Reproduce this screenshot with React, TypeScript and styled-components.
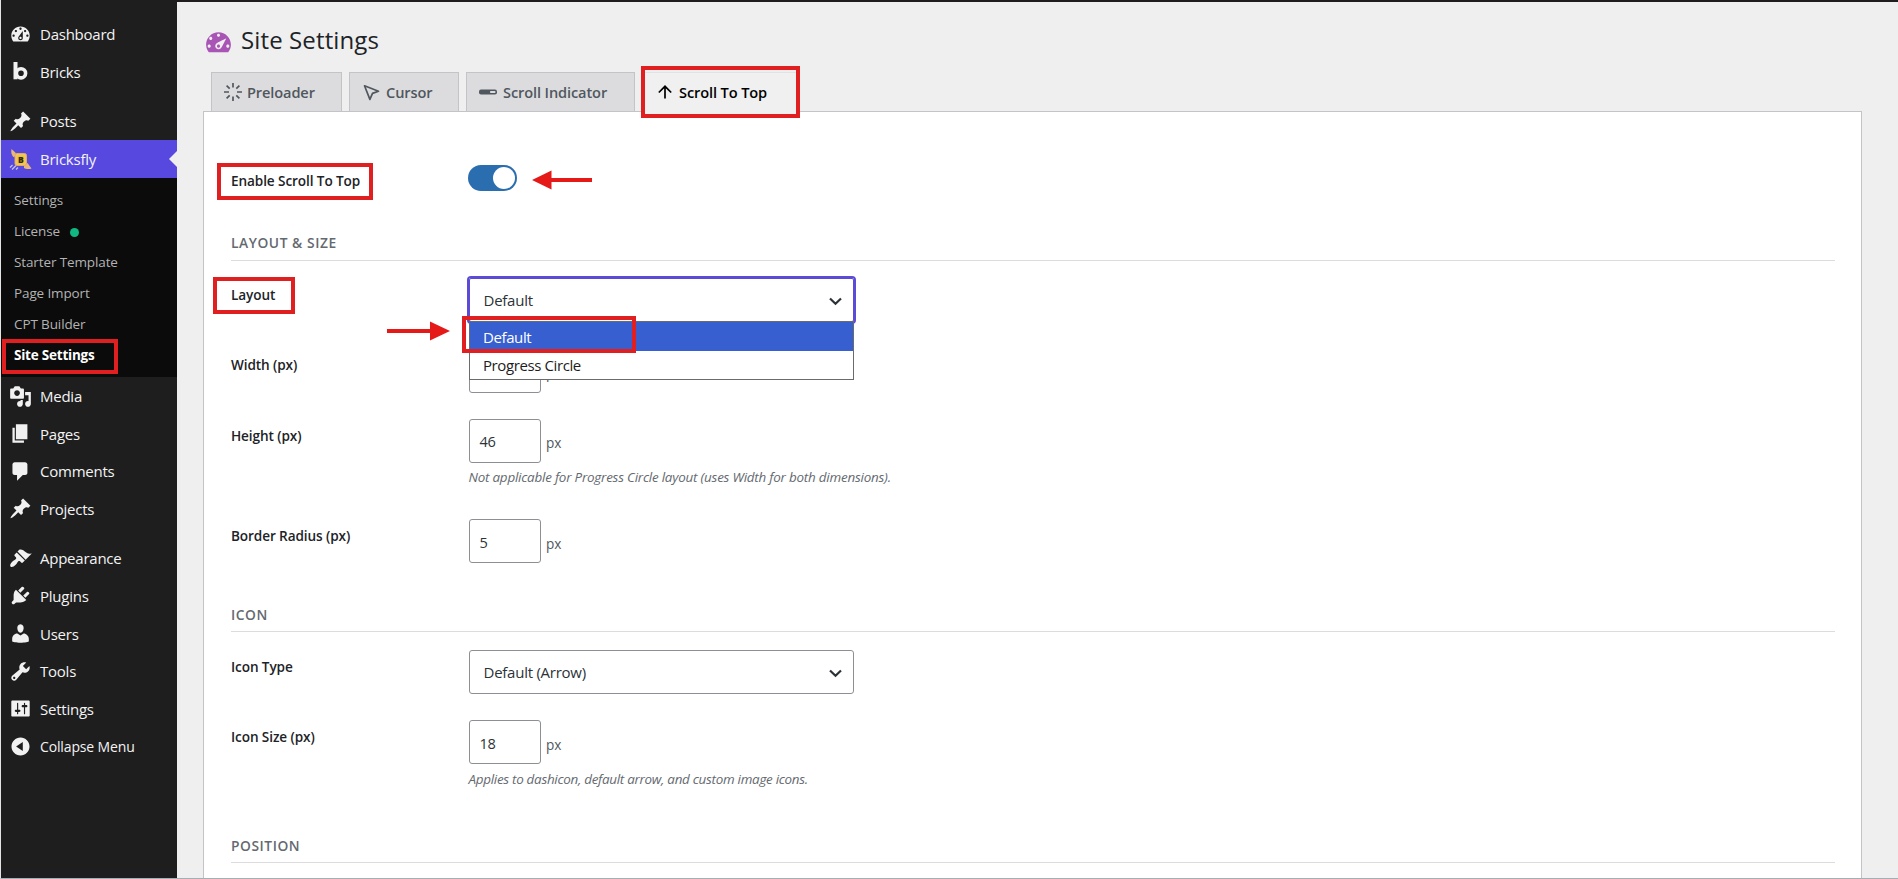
import React from "react";
import styled, { createGlobalStyle, css } from "styled-components";

const GlobalStyle = createGlobalStyle`
  * { box-sizing: border-box; }
  html, body { margin: 0; padding: 0; overflow: hidden; }
  body {
    font-family: "Open Sans", "Noto Sans", sans-serif;
    color: #1d2327;
    background: #efefef;
  }
`;

/* ---------- page frame ---------- */

const Page = styled.div`
  position: relative;
  display: flex;
  width: 1898px;
  height: 879px;
  overflow: hidden;
  background: #efefef;
  border-left: 1px solid #e4e4e4;
  border-bottom: 1px solid #a9adb0;
`;

const Sidebar = styled.nav`
  width: 176px;
  flex: none;
  padding-top: 15.6px;
  background: #1e1e1e;
`;

const Main = styled.main`
  flex: 1;
  min-width: 0;
  display: flex;
  flex-direction: column;
  border-top: 2px solid #1f1d1e;
  padding: 0 36px 0 26px;
`;

/* ---------- sidebar ---------- */

const MenuItem = styled.a<{ $active?: boolean; $gap?: boolean; $small?: boolean }>`
  position: relative;
  display: flex;
  align-items: center;
  gap: 8px;
  height: 37.6px;
  padding-left: 8px;
  margin-top: ${(p) => (p.$gap ? "11.8px" : "0")};
  font-size: ${(p) => (p.$small ? "14px" : "15px")};
  letter-spacing: ${(p) => (p.$small ? "-0.14px" : "-0.24px")};
  color: #f3f3f3;
  white-space: nowrap;
  ${(p) =>
    p.$active &&
    css`
      background: #5749df;
      &::after {
        content: "";
        position: absolute;
        right: 0;
        top: 10.5px;
        border: 8.5px solid transparent;
        border-left: 0;
        border-right-color: #efefef;
      }
    `}
`;

const MenuIcon = styled.svg`
  width: 23px;
  height: 23px;
  flex: none;
  fill: #f1f1f1;
`;

const SubMenu = styled.div`
  height: 199px;
  margin-bottom: 0.6px;
  padding: 6.8px 0 0 13px;
  background: #0b0b0b;
`;

const SubItem = styled.a<{ $current?: boolean }>`
  display: flex;
  align-items: center;
  gap: 10.5px;
  height: 31px;
  font-size: 13.5px;
  letter-spacing: ${(p) => (p.$current ? "-0.22px" : "-0.12px")};
  font-weight: ${(p) => (p.$current ? 700 : 400)};
  color: ${(p) => (p.$current ? "#ffffff" : "#b3b3b3")};
  white-space: nowrap;
`;

const StatusDot = styled.span`
  width: 9px;
  height: 9px;
  margin-top: 2px;
  border-radius: 50%;
  background: #10b981;
`;

/* ---------- header and tabs ---------- */

const TitleBar = styled.header`
  display: flex;
  align-items: center;
  height: 70px;
  gap: 7px;
`;

const TitleIcon = styled.svg`
  width: 31px;
  height: 31px;
  margin-top: 9px;
  fill: #a855b5;
`;

const Title = styled.h1`
  margin: 6px 0 0;
  font-size: 24px;
  line-height: 32px;
  font-weight: 400;
  letter-spacing: 0.12px;
`;

const Tabs = styled.div`
  display: flex;
  gap: 7px;
  height: 39px;
  padding-left: 8px;
`;

const Tab = styled.button<{ $width: number; $active?: boolean; $pad: number; $gap: number }>`
  display: flex;
  align-items: center;
  gap: ${(p) => p.$gap}px;
  width: ${(p) => p.$width}px;
  height: ${(p) => (p.$active ? 42 : 39)}px;
  padding: 0 0 ${(p) => (p.$active ? 3 : 0)}px ${(p) => p.$pad}px;
  border: 1px solid ${(p) => (p.$active ? "#e2e2e4" : "#c3c4c7")};
  border-bottom: 0;
  background: ${(p) => (p.$active ? "#f0f0f0" : "#dcdcde")};
  color: ${(p) => (p.$active ? "#000000" : "#50575e")};
  font-family: inherit;
  font-size: 14.6px;
  font-weight: 600;
  letter-spacing: -0.12px;
  white-space: nowrap;
  position: relative;
  svg {
    flex: none;
  }
`;

/* ---------- settings panel ---------- */

const Panel = styled.section`
  flex: 1;
  min-height: 0;
  overflow: hidden;
  padding: 53px 26px 0 27px;
  background: #ffffff;
  border: 1px solid #c3c4c7;
  border-bottom: 0;
`;

const SectionHeading = styled.h2<{ $before: number; $after: number }>`
  margin: 0 0 ${(p) => p.$after}px;
  padding-top: ${(p) => p.$before}px;
  height: 29px;
  border-bottom: 1px solid #dcdcde;
  font-size: 13.8px;
  line-height: 20px;
  font-weight: 600;
  letter-spacing: 0.55px;
  color: #646970;
`;

const Row = styled.div<{ $height: number }>`
  display: grid;
  grid-template-columns: 238px 1fr;
  align-items: start;
  height: ${(p) => p.$height}px;
`;

const Label = styled.label<{ $raised?: boolean }>`
  padding-top: ${(p) => (p.$raised ? 5.6 : 6.6)}px;
  font-size: 13.6px;
  line-height: 20px;
  font-weight: 600;
  letter-spacing: -0.1px;
`;

const Control = styled.div`
  position: relative;
`;

const Toggle = styled.div`
  display: flex;
  justify-content: flex-end;
  align-items: center;
  width: 49px;
  height: 26px;
  margin-left: -1px;
  padding-right: 2px;
  border-radius: 13px;
  background: #2a6eaf;
`;

const Knob = styled.span`
  width: 22px;
  height: 22px;
  border-radius: 50%;
  background: #ffffff;
`;

const SelectBox = styled.div<{ $focused?: boolean }>`
  display: flex;
  align-items: center;
  justify-content: space-between;
  width: 385px;
  height: 44px;
  padding: 0 11px 0 13.5px;
  border: 1px solid ${(p) => (p.$focused ? "#5b4bd6" : "#8c8f94")};
  box-shadow: ${(p) => (p.$focused ? "0 0 0 2px #5b4bd6" : "none")};
  border-radius: ${(p) => (p.$focused ? 2 : 3)}px;
  font-size: 15px;
  letter-spacing: -0.25px;
  color: #2c3338;
  svg {
    margin-top: 2px;
  }
`;

const OptionList = styled.div`
  position: absolute;
  z-index: 2;
  top: 43px;
  left: 0;
  width: 385px;
  height: 59px;
  border: 1px solid #6b6b6b;
  background: #ffffff;
`;

const Option = styled.div<{ $selected?: boolean }>`
  height: ${(p) => (p.$selected ? 29 : 28)}px;
  padding-left: 13px;
  font-size: 15px;
  line-height: ${(p) => (p.$selected ? 31 : 29)}px;
  letter-spacing: -0.4px;
  background: ${(p) => (p.$selected ? "#375fcf" : "#ffffff")};
  color: ${(p) => (p.$selected ? "#ffffff" : "#1d1d1d")};
`;

const NumberLine = styled.div`
  display: flex;
  align-items: center;
  gap: 5px;
  height: 44px;
`;

const NumberBox = styled.div<{ $low?: boolean }>`
  display: flex;
  align-items: center;
  width: 72px;
  height: 44px;
  padding: ${(p) => (p.$low ? 2 : 0)}px 0 0 9.5px;
  border: 1px solid #8c8f94;
  border-radius: 3px;
  font-size: 14.6px;
  letter-spacing: -0.25px;
  color: #2c3338;
`;

const Unit = styled.span<{ $low?: boolean }>`
  padding-top: ${(p) => (p.$low ? 4 : 2)}px;
  font-size: 13.6px;
  color: #50575e;
`;

const Help = styled.p<{ $low?: boolean }>`
  margin: ${(p) => (p.$low ? 5 : 4)}px 0 0 -0.5px;
  font-size: 13.4px;
  line-height: 20px;
  font-style: italic;
  letter-spacing: ${(p) => (p.$low ? -0.27 : -0.21)}px;
  color: #646970;
  white-space: nowrap;
`;

/* ---------- callouts drawn over the page ---------- */

const Frame = styled.div<{ $x: number; $y: number; $w: number; $h: number }>`
  position: absolute;
  z-index: 5;
  left: ${(p) => p.$x - 1}px;
  top: ${(p) => p.$y}px;
  width: ${(p) => p.$w}px;
  height: ${(p) => p.$h}px;
  border: 4px solid #e02020;
  pointer-events: none;
`;

const Pointer = styled.svg<{ $x: number; $y: number }>`
  position: absolute;
  z-index: 5;
  left: ${(p) => p.$x - 1}px;
  top: ${(p) => p.$y}px;
  fill: #e61919;
`;

/* ---------- icons ---------- */

const paths = {
  dashboard:
    "M3.76 16h12.48c1.1-1.37 1.76-3.11 1.76-5 0-4.42-3.58-8-8-8s-8 3.58-8 8c0 1.89.66 3.63 1.76 5zM10 4c.55 0 1 .45 1 1s-.45 1-1 1-1-.45-1-1 .45-1 1-1zM6 6c.55 0 1 .45 1 1s-.45 1-1 1-1-.45-1-1 .45-1 1-1zm8 0c.55 0 1 .45 1 1s-.45 1-1 1-1-.45-1-1 .45-1 1-1zm-5.37 5.55L12 7v6c0 1.1-.9 2-2 2s-2-.9-2-2c0-.57.24-1.08.63-1.45zM4 10c.55 0 1 .45 1 1s-.45 1-1 1-1-.45-1-1 .45-1 1-1zm12 0c.55 0 1 .45 1 1s-.45 1-1 1-1-.45-1-1 .45-1 1-1zm-5 3c0-.55-.45-1-1-1s-1 .45-1 1 .45 1 1 1 1-.45 1-1z",
  performance:
    "M3.76 17.01h12.48C17.34 15.63 18 13.9 18 12c0-4.41-3.58-8-8-8s-8 3.59-8 8c0 1.9.66 3.63 1.76 5.01zM9 6c0-.55.45-1 1-1s1 .45 1 1c0 .56-.45 1-1 1s-1-.44-1-1zM4 8c0-.55.45-1 1-1s1 .45 1 1c0 .56-.45 1-1 1s-1-.44-1-1zm4.52 3.4c.84-.83 6.51-3.5 6.51-3.5s-2.66 5.68-3.49 6.51c-.84.84-2.18.84-3.02 0-.83-.83-.83-2.18 0-3.01zM3 13c0-.55.45-1 1-1s1 .45 1 1c0 .56-.45 1-1 1s-1-.44-1-1zm6 0c0 .56.45 1 1 1s1-.44 1-1c0-.55-.45-1-1-1s-1 .45-1 1zm6 0c0-.55.45-1 1-1s1 .45 1 1c0 .56-.45 1-1 1s-1-.44-1-1z",
  pin: "M10.44 3.02l1.82-1.82 6.36 6.35-1.83 1.82c-1.05-.68-2.48-.57-3.41.36l-.75.75c-.92.93-1.04 2.35-.35 3.41l-1.83 1.82-2.41-2.41-2.8 2.79c-.42.42-3.38 2.71-3.8 2.29s1.86-3.39 2.28-3.81l2.79-2.79L4.1 9.36l1.83-1.82c1.05.69 2.48.57 3.4-.36l.75-.75c.93-.92 1.05-2.35.36-3.41z",
  media:
    "M13 11V4c0-.55-.45-1-1-1h-1.67L9 1H5L3.67 3H2c-.55 0-1 .45-1 1v7c0 .55.45 1 1 1h10c.55 0 1-.45 1-1zM7 4.5c1.38 0 2.5 1.12 2.5 2.5S8.38 9.5 7 9.5 4.5 8.38 4.5 7 5.62 4.5 7 4.5zM14 6h5v10.5c0 1.38-1.12 2.5-2.5 2.5S14 17.88 14 16.5s1.12-2.5 2.5-2.5c.17 0 .34.02.5.05V9h-3V6zm-4 8.05V13h2v3.5c0 1.38-1.12 2.5-2.5 2.5S7 17.88 7 16.5 8.12 14 9.5 14c.17 0 .34.02.5.05z",
  page: "M6 15V2h10v13H6zm-1 1h8v2H3V5h2v11z",
  comment:
    "M5 2h9c1.1 0 2 .9 2 2v7c0 1.1-.9 2-2 2h-2l-5 5v-5H5c-1.1 0-2-.9-2-2V4c0-1.1.9-2 2-2z",
  brush:
    "M14.48 11.06L7.41 3.99l1.5-1.5c.5-.56 2.3-.47 3.51.32 1.21.8 1.43 1.28 2.91 2.1 1.18.64 2.45 1.26 4.45.85zm-.71.71L6.7 4.7 4.93 6.47c-.39.39-.39 1.02 0 1.41l1.06 1.06c.39.39.39 1.03 0 1.42-.6.6-1.43 1.11-2.21 1.69-.35.26-.7.53-1.01.84C1.43 14.23.4 16.08 1.4 17.07c.99 1 2.84-.03 4.18-1.36.31-.31.58-.66.85-1.02.57-.78 1.08-1.61 1.69-2.21.39-.39 1.02-.39 1.41 0l1.06 1.06c.39.39 1.02.39 1.41 0z",
  plug: "M13.11 4.36L9.87 7.6 8 5.73l3.24-3.24c.35-.34 1.05-.2 1.56.32.52.51.66 1.21.31 1.55zm-8 1.77l.91-1.12 9.01 9.01-1.19.84c-.71.71-2.63 1.16-3.82 1.16H6.14L4.9 17.26c-.59.59-1.54.59-2.12 0-.59-.58-.59-1.53 0-2.12l1.24-1.24v-3.88c0-1.13.4-3.19 1.09-3.89zm7.26 3.97l3.24-3.24c.34-.35 1.04-.21 1.55.31.52.51.66 1.21.31 1.55l-3.24 3.25z",
  user: "M10 9.25c-2.27 0-2.73-3.44-2.73-3.44C7 4.02 7.82 2 9.97 2c2.16 0 2.98 2.02 2.71 3.81 0 0-.41 3.44-2.68 3.44zm0 2.57L12.72 10c2.39 0 4.52 2.33 4.52 4.53v2.49s-3.65 1.13-7.24 1.13c-3.65 0-7.24-1.13-7.24-1.13v-2.49c0-2.25 1.94-4.48 4.47-4.48z",
  wrench:
    "M16.68 9.77c-1.34 1.34-3.3 1.67-4.95.99l-5.41 6.52c-.99.99-2.59.99-3.58 0s-.99-2.59 0-3.57l6.52-5.42c-.68-1.65-.35-3.61.99-4.95 1.28-1.28 3.12-1.62 4.72-1.06l-2.89 2.89 2.82 2.82 2.86-2.87c.53 1.58.18 3.39-1.08 4.65zM3.81 16.21c.4.39 1.04.39 1.43 0 .4-.4.4-1.04 0-1.43-.39-.4-1.03-.4-1.43 0-.39.39-.39 1.03 0 1.43z",
  sliders:
    "M18 16V4c0-.55-.45-1-1-1H3c-.55 0-1 .45-1 1v12c0 .55.45 1 1 1h14c.55 0 1-.45 1-1zM8 11h1c.55 0 1 .45 1 1s-.45 1-1 1H8v1.5c0 .28-.22.5-.5.5s-.5-.22-.5-.5V13H6c-.55 0-1-.45-1-1s.45-1 1-1h1V5.5c0-.28.22-.5.5-.5s.5.22.5.5V11zm5-2h-1c-.55 0-1-.45-1-1s.45-1 1-1h1V5.5c0-.28.22-.5.5-.5s.5.22.5.5V7h1c.55 0 1 .45 1 1s-.45 1-1 1h-1v5.5c0 .28-.22.5-.5.5s-.5-.22-.5-.5V9z",
  collapse:
    "M10 2.16c4.33 0 7.84 3.51 7.84 7.84s-3.51 7.84-7.84 7.84S2.16 14.33 2.16 10 5.71 2.16 10 2.16zm2 11.72V6.12L6.18 9.97z",
};

const Glyph = ({ name }: { name: keyof typeof paths }) => (
  <MenuIcon viewBox="0 0 20 20">
    <path d={paths[name]} />
  </MenuIcon>
);

const BricksIcon = () => (
  <MenuIcon viewBox="0 0 23 23">
    <rect x="4.5" y="2" width="4" height="17.3" />
    <circle cx="12" cy="13.3" r="4.6" fill="none" stroke="#f1f1f1" strokeWidth="3.6" />
  </MenuIcon>
);

const BricksflyIcon = () => (
  <MenuIcon viewBox="0 0 23 23">
    <path d="M2.500 2l3.800 3.500 2 3.500-4 1C2.500 8 1.800 5 2.500 2z" fill="#e9b778" />
    <path d="M15 18l3.500-2 4 5.500c-2.800 1-5.700.7-7.500-.5z" fill="#e9b778" />
    <path d="M1 20.500l2.500-2.500M3 22.500l4-4M7 22.500l2-2" stroke="#c9c3df" strokeWidth="1.2" />
    <rect x="6" y="6.500" width="11.500" height="12" rx="2" fill="#f2c55a" stroke="#e0ab66" />
    <rect x="8.700" y="8.700" width="6.200" height="7.600" fill="#e8c432" />
    <text x="11.800" y="15.600" fontSize="8.500" fontWeight="800" textAnchor="middle" fill="#33270d">
      B
    </text>
  </MenuIcon>
);

const LoaderIcon = () => (
  <svg width="18" height="20" viewBox="0 0 18 20" stroke="#50575e" strokeWidth="1.7" fill="none">
    <path d="M9 1v4.500M9 14.500V19M0 10h5M13 10h5M2.600 3.600l3.100 3.100M12.300 13.300l3.100 3.100M2.600 16.400l3.100-3.100M12.300 6.700l3.100-3.100" />
  </svg>
);

const CursorIcon = () => (
  <svg width="17" height="17" viewBox="0 0 17 17" stroke="#50575e" strokeWidth="1.7" strokeLinejoin="round" fill="none">
    <path d="M1.500 1.800l14 5.400-6 2.200-2.600 6z" />
  </svg>
);

const IndicatorIcon = () => (
  <svg width="18" height="6" viewBox="0 0 18 6">
    <rect x="0" y="0.500" width="18" height="5" rx="2" fill="#50575e" />
    <rect x="11" y="2" width="5.500" height="2" rx="0.800" fill="#dcdcde" />
  </svg>
);

const ArrowUpIcon = () => (
  <svg width="14" height="14" viewBox="0 0 14 14" stroke="#000" strokeWidth="1.700" fill="none">
    <path d="M7 13.500V1.500M0.800 7.500L7 1.300l6.200 6.200" />
  </svg>
);

const Chevron = () => (
  <svg width="13" height="9" viewBox="0 0 13 9" stroke="#2c3338" strokeWidth="2.200" fill="none">
    <path d="M1 1.500l5.500 5.300L12 1.500" />
  </svg>
);

/* ---------- composition ---------- */

type NumberFieldProps = {
  label: string;
  value: string;
  height: number;
  help?: string;
  raised?: boolean;
  low?: boolean;
};

const NumberField = ({ label, value, height, help, raised, low }: NumberFieldProps) => (
  <Row $height={height}>
    <Label $raised={raised}>{label}</Label>
    <Control>
      <NumberLine>
        <NumberBox $low={low}>{value}</NumberBox>
        <Unit $low={low}>px</Unit>
      </NumberLine>
      {help && <Help $low={low}>{help}</Help>}
    </Control>
  </Row>
);

export default function App() {
  return (
    <>
      <GlobalStyle />
      <Page>
        <Sidebar>
          <MenuItem><Glyph name="dashboard" />Dashboard</MenuItem>
          <MenuItem><BricksIcon />Bricks</MenuItem>
          <MenuItem $gap><Glyph name="pin" />Posts</MenuItem>
          <MenuItem $active><BricksflyIcon />Bricksfly</MenuItem>
          <SubMenu>
            <SubItem>Settings</SubItem>
            <SubItem>License<StatusDot /></SubItem>
            <SubItem>Starter Template</SubItem>
            <SubItem>Page Import</SubItem>
            <SubItem>CPT Builder</SubItem>
            <SubItem $current>Site Settings</SubItem>
          </SubMenu>
          <MenuItem><Glyph name="media" />Media</MenuItem>
          <MenuItem><Glyph name="page" />Pages</MenuItem>
          <MenuItem><Glyph name="comment" />Comments</MenuItem>
          <MenuItem><Glyph name="pin" />Projects</MenuItem>
          <MenuItem $gap><Glyph name="brush" />Appearance</MenuItem>
          <MenuItem><Glyph name="plug" />Plugins</MenuItem>
          <MenuItem><Glyph name="user" />Users</MenuItem>
          <MenuItem><Glyph name="wrench" />Tools</MenuItem>
          <MenuItem><Glyph name="sliders" />Settings</MenuItem>
          <MenuItem $small><Glyph name="collapse" />Collapse Menu</MenuItem>
        </Sidebar>

        <Main>
          <TitleBar>
            <TitleIcon viewBox="0 0 20 20"><path d={paths.performance} /></TitleIcon>
            <Title>Site Settings</Title>
          </TitleBar>
          <Tabs>
            <Tab $width={131} $pad={12} $gap={5}><LoaderIcon />Preloader</Tab>
            <Tab $width={110} $pad={13} $gap={6}><CursorIcon />Cursor</Tab>
            <Tab $width={169} $pad={12} $gap={6}><IndicatorIcon />Scroll Indicator</Tab>
            <Tab $width={155} $pad={15} $gap={7} $active><ArrowUpIcon />Scroll To Top</Tab>
          </Tabs>
          <Panel>
            <Row $height={67}>
              <Label $raised>Enable Scroll To Top</Label>
              <Control><Toggle><Knob /></Toggle></Control>
            </Row>

            <SectionHeading $before={1} $after={17}>LAYOUT &amp; SIZE</SectionHeading>
            <Row $height={71}>
              <Label>Layout</Label>
              <Control>
                <SelectBox $focused>Default<Chevron /></SelectBox>
                <OptionList>
                  <Option $selected>Default</Option>
                  <Option>Progress Circle</Option>
                </OptionList>
              </Control>
            </Row>
            <NumberField label="Width (px)" value="" height={70} raised />
            <NumberField
              label="Height (px)"
              value="46"
              height={100}
              help="Not applicable for Progress Circle layout (uses Width for both dimensions)."
            />
            <NumberField label="Border Radius (px)" value="5" height={84} low />

            <SectionHeading $before={2} $after={18}>ICON</SectionHeading>
            <Row $height={70}>
              <Label>Icon Type</Label>
              <Control><SelectBox>Default (Arrow)<Chevron /></SelectBox></Control>
            </Row>
            <NumberField
              label="Icon Size (px)"
              value="18"
              height={114}
              help="Applies to dashicon, default arrow, and custom image icons."
              low
            />

            <SectionHeading $before={2} $after={0}>POSITION</SectionHeading>
          </Panel>
        </Main>

        <Frame $x={641} $y={66} $w={159} $h={52} />
        <Frame $x={217} $y={163} $w={156} $h={37} />
        <Frame $x={213} $y={277} $w={82} $h={37} />
        <Frame $x={462} $y={316} $w={174} $h={37} />
        <Frame $x={2} $y={339} $w={116} $h={35} />
        <Pointer $x={532} $y={170} width="60" height="20" viewBox="0 0 60 20">
          <path d="M0 10L19.500 0.500V8H60v4H19.500v7.500z" />
        </Pointer>
        <Pointer $x={387} $y={321} width="63" height="20" viewBox="0 0 63 20">
          <path d="M63 10L43 0.500V8H0v4H43v7.500z" />
        </Pointer>
      </Page>
    </>
  );
}
